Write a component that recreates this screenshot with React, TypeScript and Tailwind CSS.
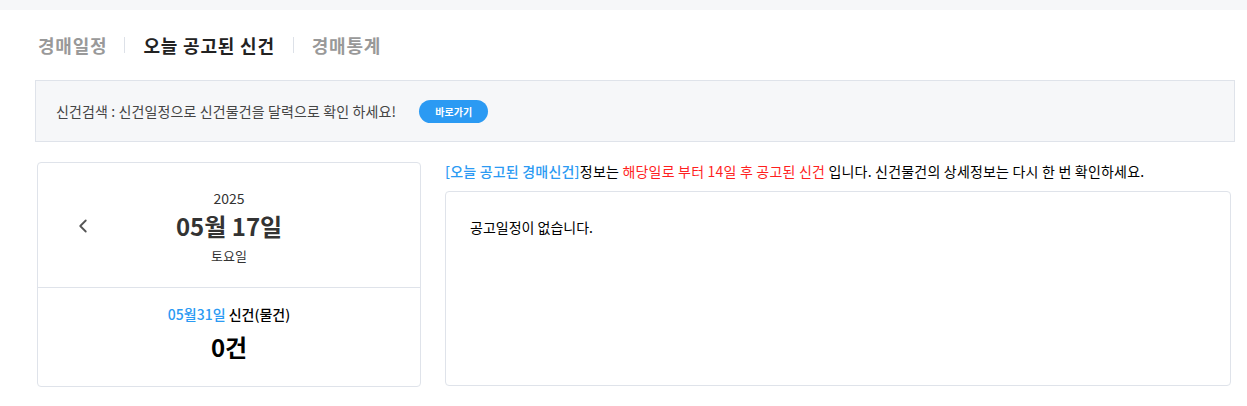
import { ChevronLeft } from "lucide-react"

const font = { fontFamily: '"Noto Sans CJK KR", "Noto Sans", sans-serif' }

export default function App() {
  return (
    <div className="min-h-[406px] bg-white text-[#222]" style={font}>
      <div className="h-[10px] bg-[#f6f7f9]" />

      <div className="ml-[35px] w-[1200px]">
        {/* tabs */}
        <div className="flex items-center h-[70px] pl-[3px] text-[18px] font-bold tracking-[0.8px]">
          <span className="text-[#999]">경매일정</span>
          <span className="ml-[17px] mr-[18px] h-[16px] w-px bg-[#dde1e8]" />
          <span className="text-[#222]">오늘 공고된 신건</span>
          <span className="ml-[18px] mr-[18px] h-[16px] w-px bg-[#dde1e8]" />
          <span className="text-[#999]">경매통계</span>
        </div>

        {/* search banner */}
        <div className="flex items-center h-[62px] border border-[#dfe3ea] bg-[#f6f7f9] pl-[20px]">
          <span className="text-[14px] text-[#444] tracking-[0.12px]">신건검색 : 신건일정으로 신건물건을 달력으로 확인 하세요!</span>
          <button className="ml-[23px] h-[23px] w-[69px] rounded-full bg-[#2b9af3] text-[10px] font-bold text-white">
            바로가기
          </button>
        </div>

        <div className="flex mt-[20px] pl-[2px]">
          {/* date card */}
          <div className="w-[384px] h-[225px] rounded-[4px] border border-[#dfe3ea] flex flex-col">
            <div className="relative h-[125px] border-b border-[#dfe3ea] flex flex-col items-center pt-[25px]">
              <ChevronLeft className="absolute left-[34px] top-[52px] w-[22px] h-[22px] text-[#555]" strokeWidth={2} />
              <div className="text-[14px] leading-[20px] text-[#333]">2025</div>
              <div className="text-[24px] font-bold leading-[36px] text-[#333]">05월 17일</div>
              <div className="text-[13px] leading-[20px] mt-[2px] text-[#333]">토요일</div>
            </div>
            <div className="flex flex-col items-center pt-[16px]">
              <div className="text-[14px] leading-[20px] font-medium">
                <span className="text-[#2b9af3]">05월31일</span> <span className="text-black">신건(물건)</span>
              </div>
              <div className="text-[24px] font-bold leading-[34px] mt-[6px] text-black">0건</div>
            </div>
          </div>

          {/* info */}
          <div className="ml-[24px] flex-1 pr-[4px]">
            <p className="text-[14px] leading-[20px] -mt-[1px] text-black tracking-[0.2px]">
              <span className="text-[#2b9af3] font-medium">[오늘 공고된 경매신건]</span>정보는{" "}
              <span className="text-[#ff1f1f]">해당일로 부터 14일 후 공고된 신건</span> 입니다. 신건물건의 상세정보는 다시 한 번 확인하세요.
            </p>
            <div className="mt-[10px] h-[195px] rounded-[4px] border border-[#dfe3ea] px-[24px] pt-[22px]">
              <span className="text-[14px] text-black">공고일정이 없습니다.</span>
            </div>
          </div>
        </div>
      </div>
    </div>
  )
}
